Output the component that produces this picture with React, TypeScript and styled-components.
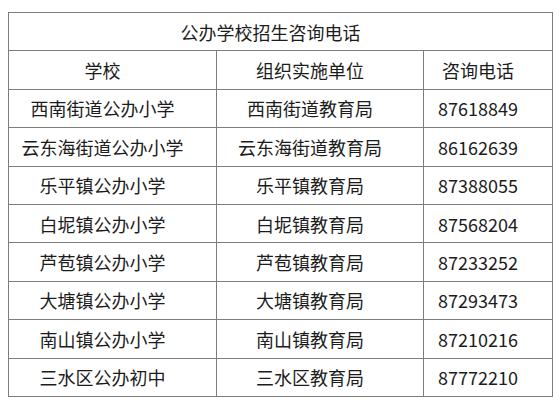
import styled, { createGlobalStyle } from "styled-components";

const GlobalStyle = createGlobalStyle`
  html, body {
    margin: 0;
    padding: 0;
    background: #ffffff;
  }
  body {
    font-family: "Noto Sans CJK SC", "Noto Sans", sans-serif;
    color: #1c1c1c;
  }
`;

const Page = styled.div`
  width: 560px;
  height: 400px;
  padding: 12px 0 0 8px;
  box-sizing: border-box;
  background: #fff;
`;

const Table = styled.table`
  border-collapse: collapse;
  width: 544px;
  height: 384px;
  table-layout: fixed;
  font-size: 18px;
  color: #1c1c1c;
`;

const Row = styled.tr`
  height: 38.4px;
`;

// text sits a little left of centre in every cell of the source
const Cell = styled.td`
  border: 1px solid #7d7d7d;
  padding: 0 20px 0 0;
  text-align: center;
  vertical-align: middle;
  white-space: nowrap;
  line-height: 1;
  font-weight: 400;
`;

const rows: [string, string, string][] = [
  ["西南街道公办小学", "西南街道教育局", "87618849"],
  ["云东海街道公办小学", "云东海街道教育局", "86162639"],
  ["乐平镇公办小学", "乐平镇教育局", "87388055"],
  ["白坭镇公办小学", "白坭镇教育局", "87568204"],
  ["芦苞镇公办小学", "芦苞镇教育局", "87233252"],
  ["大塘镇公办小学", "大塘镇教育局", "87293473"],
  ["南山镇公办小学", "南山镇教育局", "87210216"],
  ["三水区公办初中", "三水区教育局", "87772210"],
];

export default function App() {
  return (
    <Page>
      <GlobalStyle />
      <Table>
        <colgroup>
          <col style={{ width: 208 }} />
          <col style={{ width: 207 }} />
          <col style={{ width: 129 }} />
        </colgroup>
        <tbody>
          <Row>
            <Cell colSpan={3}>公办学校招生咨询电话</Cell>
          </Row>
          <Row>
            <Cell>学校</Cell>
            <Cell>组织实施单位</Cell>
            <Cell>咨询电话</Cell>
          </Row>
          {rows.map(([school, unit, phone]) => (
            <Row key={phone}>
              <Cell>{school}</Cell>
              <Cell>{unit}</Cell>
              <Cell>{phone}</Cell>
            </Row>
          ))}
        </tbody>
      </Table>
    </Page>
  );
}
